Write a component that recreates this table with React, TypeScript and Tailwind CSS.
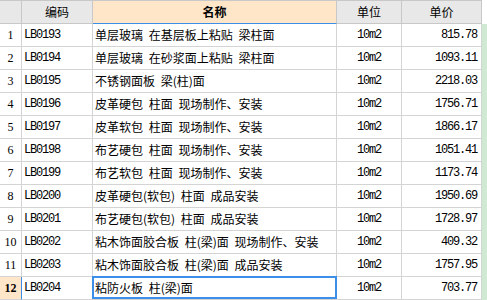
import React from "react";

type Row = { n: number; code: string; name: string; unit: string; price: string };

const rows: Row[] = [
  { n: 1, code: "LB0193", name: "单层玻璃 在基层板上粘贴 梁柱面", unit: "10m2", price: "815.78" },
  { n: 2, code: "LB0194", name: "单层玻璃 在砂浆面上粘贴 梁柱面", unit: "10m2", price: "1093.11" },
  { n: 3, code: "LB0195", name: "不锈钢面板 梁(柱)面", unit: "10m2", price: "2218.03" },
  { n: 4, code: "LB0196", name: "皮革硬包 柱面 现场制作、安装", unit: "10m2", price: "1756.71" },
  { n: 5, code: "LB0197", name: "皮革软包 柱面 现场制作、安装", unit: "10m2", price: "1866.17" },
  { n: 6, code: "LB0198", name: "布艺硬包 柱面 现场制作、安装", unit: "10m2", price: "1051.41" },
  { n: 7, code: "LB0199", name: "布艺软包 柱面 现场制作、安装", unit: "10m2", price: "1173.74" },
  { n: 8, code: "LB0200", name: "皮革硬包(软包) 柱面 成品安装", unit: "10m2", price: "1950.69" },
  { n: 9, code: "LB0201", name: "布艺硬包(软包) 柱面 成品安装", unit: "10m2", price: "1728.97" },
  { n: 10, code: "LB0202", name: "粘木饰面胶合板 柱(梁)面 现场制作、安装", unit: "10m2", price: "409.32" },
  { n: 11, code: "LB0203", name: "粘木饰面胶合板 柱(梁)面 成品安装", unit: "10m2", price: "1757.95" },
  { n: 12, code: "LB0204", name: "粘防火板 柱(梁)面", unit: "10m2", price: "703.77" },
];

const mono = "font-['Liberation_Mono','DejaVu_Sans_Mono',monospace] text-[12px] tracking-[-1.2px]";
const cjk = "font-['Noto_Sans_CJK_SC','Noto_Sans',sans-serif] text-[12px]";

export default function App() {
  return (
    <div className="w-[487px] h-[300px] overflow-hidden bg-white text-black">
      <div className="grid grid-cols-[22px_71px_244px_65px_80px_5px] h-[24px]">
        <div className="border-t border-b border-r border-[#c8c8c8] bg-[#e8e8e8]" />
        <div className={`border-t border-b border-r border-[#c8c8c8] bg-[#e8e8e8] flex items-center justify-center ${cjk}`}>编码</div>
        <div className={`border-t border-r border-[#c8c8c8] border-b border-b-[#3d8ee8] bg-[#ffe6c9] flex items-center justify-center font-bold ${cjk}`}>名称</div>
        <div className={`border-t border-b border-r border-[#c8c8c8] bg-[#e8e8e8] flex items-center justify-center ${cjk}`}>单位</div>
        <div className={`border-t border-b border-r border-[#c8c8c8] bg-[#e8e8e8] flex items-center justify-center ${cjk}`}>单价</div>
        <div className="bg-white" />
      </div>
      {rows.map((r) => {
        const sel = r.n === 12;
        return (
          <div key={r.n} className="grid grid-cols-[22px_71px_244px_65px_80px_5px] h-[23px]">
            <div
              className={`border-b border-r border-[#d4d4d4] flex items-center justify-center font-['Liberation_Serif',serif] text-[12px] ${
                sel ? "bg-[#ffe6c9] font-bold border-r-[#3d8ee8]" : "bg-white"
              }`}
            >
              {r.n}
            </div>
            <div className={`border-b border-r border-[#d4d4d4] flex items-center pl-[2px] ${mono}`}>{r.code}</div>
            <div className={`relative border-b border-r border-[#d4d4d4] flex items-center pl-[2px] [word-spacing:3px] whitespace-nowrap ${cjk}`}>
              {r.name}
              {sel && <div className="absolute left-[-1px] top-[-1px] right-[-1px] bottom-0 border-2 border-[#3d8ee8]" />}
            </div>
            <div className={`border-b border-r border-[#d4d4d4] flex items-center justify-center ${mono}`}>{r.unit}</div>
            <div className={`border-b border-r border-[#d4d4d4] flex items-center justify-end pr-[4px] ${mono}`}>{r.price}</div>
            <div className="bg-[#cfe9d2]" />
          </div>
        );
      })}
    </div>
  );
}
